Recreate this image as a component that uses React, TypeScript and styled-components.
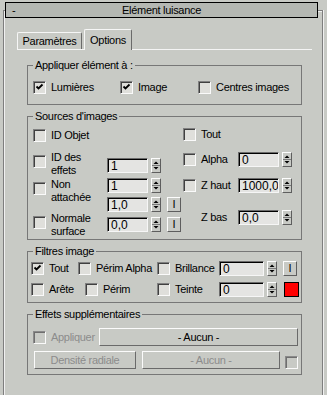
import React from 'react';
import styled, { createGlobalStyle } from 'styled-components';

const GlobalStyle = createGlobalStyle`
  html, body {
    margin: 0;
    padding: 0;
    background: #c8cac5;
  }
  body {
    font-family: 'Liberation Sans', Arial, sans-serif;
    font-size: 11px;
    color: #000;
  }
`;

const Page = styled.div`
  width: 327px;
  height: 395px;
  box-sizing: border-box;
  padding: 10px 4px 0 3px;
  overflow: hidden;
`;

const Rollout = styled.div`
  height: 100%;
  box-sizing: border-box;
  border: 1px solid #7e7e7e;
  border-bottom: none;
  box-shadow: inset 1px 1px 0 #f0f0f0, 1px 0 0 #f0f0f0;
`;

const Header = styled.div`
  margin: -9px 4px 0 1px;
  height: 16px;
  box-sizing: border-box;
  border: 1px solid #000;
  background: #b5b8b3;
  display: grid;
  grid-template-columns: 16px 1fr 16px;
  align-items: center;
  line-height: 13px;
  letter-spacing: -0.3px;
`;

const Minus = styled.span`
  padding-left: 6px;
`;

const Title = styled.span`
  text-align: center;
`;

const TabBar = styled.div`
  margin: 11px 10px 0 13px;
  height: 20px;
  border-bottom: 1px solid #f4f4f4;
  display: flex;
  align-items: flex-end;
`;

const Tab = styled.div<{ $active?: boolean; $w: number }>`
  width: ${(p) => p.$w}px;
  height: ${(p) => (p.$active ? 21 : 17)}px;
  margin-bottom: ${(p) => (p.$active ? -1 : 0)}px;
  margin-left: ${(p) => (p.$active ? 2 : 0)}px;
  box-sizing: border-box;
  border-top: 1px solid #f6f6f6;
  border-left: 1px solid #f6f6f6;
  border-right: 1px solid #6a6a6a;
  border-radius: 2px 2px 0 0;
  background: #c8cac5;
  text-align: center;
  padding-top: ${(p) => (p.$active ? 4 : 2)}px;
  line-height: 13px;
  letter-spacing: -0.3px;
`;

const TabPanel = styled.div`
  margin: 0 10px 0 13px;
  padding: 9px 10px 0;
  display: flex;
  flex-direction: column;
  gap: 5px;
`;

const Group = styled.fieldset`
  margin: 0;
  padding: 0;
  min-width: 0;
  border: 1px solid #777;
`;

const Legend = styled.legend`
  margin-left: 5px;
  padding: 0 2px;
  line-height: 12px;
  letter-spacing: -0.3px;
`;

const ApplyGrid = styled.div`
  padding: 10px 0 10px 5px;
  display: grid;
  grid-template-columns: 87px 78px auto;
`;

const Item = styled.div<{ $w?: number }>`
  display: flex;
  align-items: center;
  gap: 5px;
  flex: none;
  width: ${(p) => (p.$w ? `${p.$w}px` : 'auto')};
`;

const Label = styled.span<{ $dim?: boolean }>`
  white-space: nowrap;
  letter-spacing: -0.3px;
  line-height: 13px;
  color: ${(p) => (p.$dim ? '#8c8c8c' : '#000')};
`;

const BoxEl = styled.span<{ $dim?: boolean; $mt?: number }>`
  width: 13px;
  height: 13px;
  flex: none;
  box-sizing: border-box;
  margin-top: ${(p) => p.$mt ?? 0}px;
  border-style: solid;
  border-width: 1px;
  border-color: ${(p) => (p.$dim ? '#8a8a8a #fafafa #fafafa #8a8a8a' : '#808080 #fafafa #fafafa #808080')};
  box-shadow: inset 1px 1px 0 ${(p) => (p.$dim ? '#6e6e6e' : '#404040')};
  background: ${(p) => (p.$dim ? '#c8cac5' : '#dfdfdb')};
  display: block;
`;

const Check = ({ on, dim, mt }: { on?: boolean; dim?: boolean; mt?: number }) => (
  <BoxEl $dim={dim} $mt={mt}>
    {on && (
      <svg width="11" height="11" viewBox="0 0 11 11" style={{ display: 'block' }}>
        <path d="M2.5 4.5 L4.5 6.5 L8.5 2.5" fill="none" stroke="#000" strokeWidth="1.8" />
      </svg>
    )}
  </BoxEl>
);

const Sources = styled.div`
  padding: 0 0 1px 5px;
  display: flex;
`;

const Col = styled.div<{ $w?: number }>`
  width: ${(p) => (p.$w ? `${p.$w}px` : 'auto')};
  display: flex;
  flex-direction: column;
`;

const SrcRow = styled.div<{ $mt: number; $center?: boolean }>`
  margin-top: ${(p) => p.$mt}px;
  display: grid;
  grid-template-columns: 18px 56px auto;
  align-items: ${(p) => (p.$center ? 'center' : 'start')};
`;

const SideRow = styled.div<{ $mt: number }>`
  margin-top: ${(p) => p.$mt}px;
  display: grid;
  grid-template-columns: 18px 37px auto;
  align-items: center;
`;

const Stack = styled.div<{ $mt?: number }>`
  margin-top: ${(p) => p.$mt ?? 0}px;
  display: flex;
  flex-direction: column;
  gap: 4px;
`;

const NumRow = styled.div`
  display: flex;
  align-items: center;
  gap: 3px;
`;

const Field = styled.span<{ $w: number }>`
  width: ${(p) => p.$w}px;
  height: 15px;
  flex: none;
  box-sizing: border-box;
  border-style: solid;
  border-width: 1px;
  border-color: #6b6b6b #f6f6f6 #f6f6f6 #6b6b6b;
  box-shadow: inset 1px 1px 0 #000;
  background: #e4e4e2;
  padding: 1px 0 0 3px;
  font-size: 12px;
  line-height: 12px;
  white-space: nowrap;
  overflow: hidden;
`;

const SpinBox = styled.span`
  width: 10px;
  height: 15px;
  flex: none;
  box-sizing: border-box;
  border-style: solid;
  border-width: 1px;
  border-color: #fdfdfd #5e5e5e #5e5e5e #fdfdfd;
  display: flex;
  align-items: center;
  justify-content: center;
`;

const Spinner = () => (
  <SpinBox>
    <svg width="8" height="13" viewBox="0 0 8 13">
      <path d="M1.5 5 L4 2.5 L6.5 5 Z" fill="#000" />
      <line x1="0" y1="6.5" x2="8" y2="6.5" stroke="#7a7a7a" strokeWidth="1" />
      <path d="M1.5 8 L4 10.5 L6.5 8 Z" fill="#000" />
    </svg>
  </SpinBox>
);

const SmallBtn = styled.span<{ $ml?: number }>`
  width: 14px;
  height: 15px;
  flex: none;
  margin-left: ${(p) => p.$ml ?? 0}px;
  box-sizing: border-box;
  border-style: solid;
  border-width: 1px;
  border-color: #fdfdfd #5e5e5e #5e5e5e #fdfdfd;
  display: flex;
  align-items: center;
  justify-content: center;
  line-height: 11px;
`;

const Swatch = styled.span`
  width: 15px;
  height: 15px;
  margin-left: 4px;
  flex: none;
  box-sizing: border-box;
  border: 1px solid #000;
  background: #ff0000;
`;

const Filters = styled.div`
  padding: 4px 0 5px 3px;
  display: flex;
  flex-direction: column;
  gap: 6px;
`;

const Line = styled.div`
  height: 15px;
  display: flex;
  align-items: center;
`;

const Extra = styled.div`
  padding: 8px 3px 5px 5px;
  display: flex;
  flex-direction: column;
  gap: 5px;
`;

const ExtraRow = styled.div`
  height: 18px;
  display: flex;
  align-items: center;
`;

const Button = styled.div<{ $dim?: boolean; $w?: number; $ml?: number }>`
  height: 18px;
  box-sizing: border-box;
  flex: ${(p) => (p.$w ? 'none' : '1')};
  width: ${(p) => (p.$w ? `${p.$w}px` : 'auto')};
  margin-left: ${(p) => p.$ml ?? 0}px;
  border-style: solid;
  border-width: 1px;
  border-color: #fbfbfb #6a6a6a #6a6a6a #fbfbfb;
  display: flex;
  align-items: center;
  justify-content: center;
  letter-spacing: -0.3px;
  color: ${(p) => (p.$dim ? '#8c8c8c' : '#000')};
`;

const Corner = styled.div`
  align-self: flex-end;
  margin-left: 5px;
`;

export default function App() {
  return (
    <>
      <GlobalStyle />
      <Page>
        <Rollout>
          <Header>
            <Minus>-</Minus>
            <Title>Elément luisance</Title>
            <span />
          </Header>

          <TabBar>
            <Tab $w={65}>Paramètres</Tab>
            <Tab $w={48} $active>
              Options
            </Tab>
          </TabBar>

          <TabPanel>
            <Group>
              <Legend>Appliquer élément à :</Legend>
              <ApplyGrid>
                <Item>
                  <Check on />
                  <Label>Lumières</Label>
                </Item>
                <Item>
                  <Check on />
                  <Label>Image</Label>
                </Item>
                <Item>
                  <Check />
                  <Label>Centres images</Label>
                </Item>
              </ApplyGrid>
            </Group>

            <Group>
              <Legend>Sources d'images</Legend>
              <Sources>
                <Col $w={150}>
                  <SrcRow $mt={7} $center>
                    <Check />
                    <Label>ID Objet</Label>
                  </SrcRow>
                  <SrcRow $mt={9}>
                    <Check mt={4} />
                    <Label>
                      ID des
                      <br />
                      effets
                    </Label>
                    <Stack $mt={7}>
                      <NumRow>
                        <Field $w={41}>1</Field>
                        <Spinner />
                      </NumRow>
                    </Stack>
                  </SrcRow>
                  <SrcRow $mt={1}>
                    <Check mt={4} />
                    <Label>
                      Non
                      <br />
                      attachée
                    </Label>
                    <Stack>
                      <NumRow>
                        <Field $w={41}>1</Field>
                        <Spinner />
                      </NumRow>
                      <NumRow>
                        <Field $w={41}>1,0</Field>
                        <Spinner />
                        <SmallBtn $ml={3}>I</SmallBtn>
                      </NumRow>
                    </Stack>
                  </SrcRow>
                  <SrcRow $mt={0}>
                    <Check mt={4} />
                    <Label>
                      Normale
                      <br />
                      surface
                    </Label>
                    <Stack $mt={5}>
                      <NumRow>
                        <Field $w={41}>0,0</Field>
                        <Spinner />
                        <SmallBtn $ml={3}>I</SmallBtn>
                      </NumRow>
                    </Stack>
                  </SrcRow>
                </Col>
                <Col>
                  <SideRow $mt={6}>
                    <Check />
                    <Label>Tout</Label>
                  </SideRow>
                  <SideRow $mt={11}>
                    <Check />
                    <Label>Alpha</Label>
                    <NumRow>
                      <Field $w={41}>0</Field>
                      <Spinner />
                    </NumRow>
                  </SideRow>
                  <SideRow $mt={11}>
                    <Check />
                    <Label>Z haut</Label>
                    <NumRow>
                      <Field $w={41}>1000,0</Field>
                      <Spinner />
                    </NumRow>
                  </SideRow>
                  <SideRow $mt={17}>
                    <span />
                    <Label>Z bas</Label>
                    <NumRow>
                      <Field $w={41}>0,0</Field>
                      <Spinner />
                    </NumRow>
                  </SideRow>
                </Col>
              </Sources>
            </Group>

            <Group>
              <Legend>Filtres image</Legend>
              <Filters>
                <Line>
                  <Item $w={47}>
                    <Check on />
                    <Label>Tout</Label>
                  </Item>
                  <Item $w={79}>
                    <Check />
                    <Label>Périm Alpha</Label>
                  </Item>
                  <Item $w={62}>
                    <Check />
                    <Label>Brillance</Label>
                  </Item>
                  <NumRow>
                    <Field $w={45}>0</Field>
                    <Spinner />
                    <SmallBtn $ml={3}>I</SmallBtn>
                  </NumRow>
                </Line>
                <Line>
                  <Item $w={54}>
                    <Check />
                    <Label>Arête</Label>
                  </Item>
                  <Item $w={72}>
                    <Check />
                    <Label>Périm</Label>
                  </Item>
                  <Item $w={62}>
                    <Check />
                    <Label>Teinte</Label>
                  </Item>
                  <NumRow>
                    <Field $w={45}>0</Field>
                    <Spinner />
                    <Swatch />
                  </NumRow>
                </Line>
              </Filters>
            </Group>

            <Group>
              <Legend>Effets supplémentaires</Legend>
              <Extra>
                <ExtraRow>
                  <Item $w={66}>
                    <Check dim />
                    <Label $dim>Appliquer</Label>
                  </Item>
                  <Button>- Aucun -</Button>
                </ExtraRow>
                <ExtraRow>
                  <Button $dim $w={102} $ml={1}>
                    Densité radiale
                  </Button>
                  <Button $dim $w={138} $ml={6}>
                    - Aucun -
                  </Button>
                  <Corner>
                    <Check dim />
                  </Corner>
                </ExtraRow>
              </Extra>
            </Group>
          </TabPanel>
        </Rollout>
      </Page>
    </>
  );
}
